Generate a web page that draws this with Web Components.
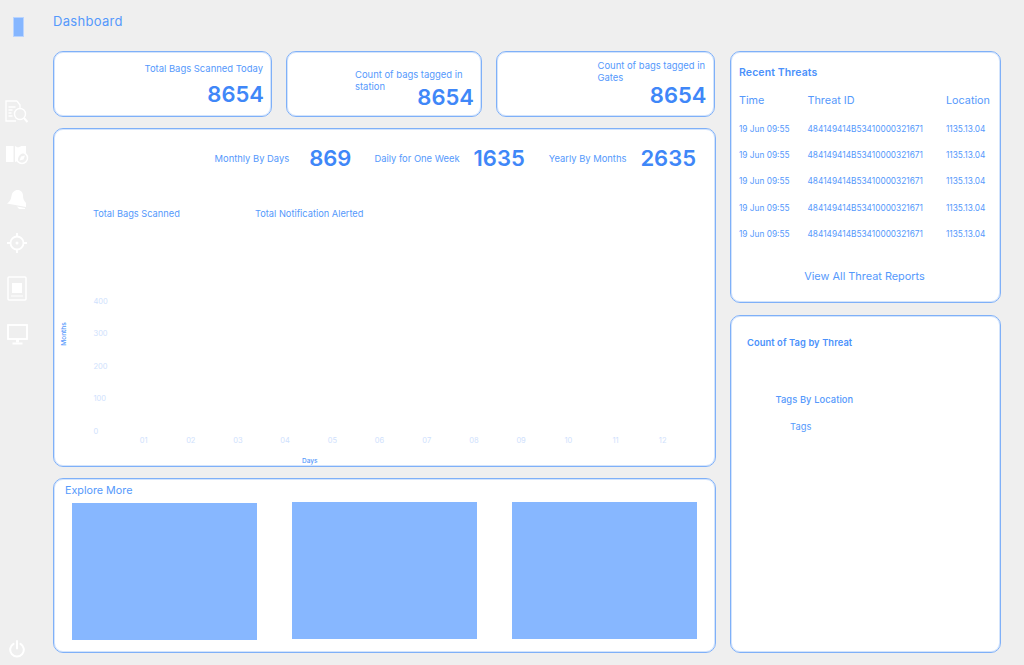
<!DOCTYPE html>
<html lang="en"><head><meta charset="utf-8"><title>Dashboard</title>
<style>
html,body{margin:0;padding:0;background:#efefef}
body{font-family:Inter,"Liberation Sans",sans-serif;color:#5599fc;width:1024px;height:665px;overflow:hidden}
</style></head><body>
<dash-app></dash-app>
<script>
const def=(name,html,init)=>customElements.define(name,class extends HTMLElement{
  constructor(){super();this.attachShadow({mode:'open'}).innerHTML=html;}
  connectedCallback(){init&&init(this,this.shadowRoot);}
});
const FONT='font-family:Inter,"Liberation Sans",sans-serif;';
const EDGE='background:#fff;border:1px solid #7fb0f8;box-shadow:inset 0 0 0 1px rgba(130,178,247,.35);border-radius:10px;';
def('dash-panel',`<style>:host{display:block;box-sizing:border-box;${EDGE}min-width:0}</style><slot></slot>`);

def('side-bar',`<style>:host{display:flex;flex-direction:column;align-items:center;box-sizing:border-box;width:37px;height:665px;padding-top:17px;margin-right:16px;flex:none}
svg{display:block;flex:none}
.logo{width:11px;height:20px;background:#85b6ff;border:1px solid #b9d4ff;box-sizing:border-box;margin-bottom:63px;margin-left:0}
.push{flex:1}
</style>
<div class="logo"></div>
<svg width="23" height="24" viewBox="0 0 23 24" fill="none" stroke="#fff" stroke-width="1.4" style="margin-bottom:21px;margin-left:-4px"><path d="M12 1H1v20h10M12 1l3 4v3M3.500 7h7M3.500 10h4M3.500 13h3M3.500 16h4"/><circle cx="15" cy="14" r="5.500"/><path d="M19 18l3.500 4" stroke-width="2"/></svg>
<svg width="23" height="20" viewBox="0 0 23 20" fill="#fff" style="margin-bottom:25px;margin-left:-3px"><path d="M0 1h7.500v16H0zM9 1l3 1.500L15.500 1H20v7a7 7 0 0 0-8 8l-3 1z"/><circle cx="16" cy="13" r="5.500" fill="none" stroke="#fff" stroke-width="1.500"/><path d="M13.500 15.500l1.500-4 4-1-1.500 4z"/></svg>
<svg width="19" height="19" viewBox="0 0 19 19" fill="#fff" style="margin-bottom:24px;margin-left:-4px"><path d="M10.500 0c3.600 0 5.500 2.500 5.500 5.500 0 3 .8 5 3 7.500v4L0 13.500C3 11.500 4 9 4.500 6 5 2.500 7.500 0 10.500 0z"/><path d="M10 16.500l8 1.500v1h-6z"/></svg>
<svg width="20" height="20" viewBox="0 0 20 20" fill="none" stroke="#fff" stroke-width="1.800" style="margin-bottom:23px;margin-left:-3px"><circle cx="10" cy="10" r="6.500"/><path d="M10 0v3.500M10 16.500V20M0 10h3.500M16.500 10H20"/><circle cx="10" cy="10" r="1.500" fill="#fff" stroke="none"/></svg>
<svg width="20" height="25" viewBox="0 0 20 25" fill="none" stroke="#fff" stroke-width="1.500" style="margin-bottom:23px;margin-left:-3px"><rect x="1" y="1" width="18" height="23" rx="1"/><rect x="5" y="7" width="10" height="10" fill="#fff" stroke="none"/><path d="M4 20h12" stroke-width="1"/></svg>
<svg width="21" height="21" viewBox="0 0 21 21" fill="none" stroke="#fff" stroke-width="1.800" style="margin-left:-3px"><rect x="1" y="1" width="19" height="14"/><path d="M10.500 15v3.500" stroke-width="3"/><path d="M5.500 19.500h10" stroke-width="2"/></svg>
<div class="push"></div>
<svg width="16" height="18" viewBox="0 0 16 18" fill="none" stroke="#fff" stroke-width="2" stroke-linecap="round" style="margin-bottom:7px;margin-left:-3px"><path d="M8 1v7.500"/><path d="M4.500 3.800a6.800 6.800 0 1 0 7 0"/></svg>`);

def('stat-card',`<style>:host{display:flex;flex-direction:column;box-sizing:border-box;height:66px;padding:0 8px var(--pb,16.500px) 0;align-items:flex-end;${EDGE}min-width:0}
.l{font-size:9.450px;line-height:11.600px;color:#5599fc;width:var(--lw,auto);white-space:nowrap;margin-top:var(--lt,10px);margin-bottom:-4px}
.n{font-size:22px;font-weight:600;line-height:12px;color:#3f87f8;margin-top:auto;margin-right:-1px}
</style><div class="l"><slot name="label"></slot></div><div class="n"><slot></slot></div>`);

def('metric-item',`<style>:host{display:flex;align-items:center;gap:var(--g,14px)}
.l{font-size:9.400px;color:#5599fc}.n{font-size:22px;font-weight:600;color:#3f87f8;line-height:29px}
</style><span class="l"><slot name="label"></slot></span><span class="n"><slot></slot></span>`);

def('bar-chart',`<style>:host{display:block;position:relative;height:165px;font-size:7.500px;color:#cfe1fd}
.y{position:absolute;left:39.500px;top:.5px;display:grid;grid-auto-rows:32.500px;line-height:10px}
.x{position:absolute;left:66px;top:140px;display:grid;grid-template-columns:repeat(12,47.200px);line-height:10px;text-align:center}
.mo{position:absolute;left:-2px;top:34px;font-size:6.500px;font-weight:500;color:#5599fc;transform:rotate(-90deg);transform-origin:center;width:24px;text-align:center;line-height:8px}
.da{position:absolute;left:248px;top:161px;font-size:6.500px;font-weight:500;color:#5599fc;line-height:8px}
</style>
<div class="y"><span>400</span><span>300</span><span>200</span><span>100</span><span>0</span></div>
<div class="x"><span>01</span><span>02</span><span>03</span><span>04</span><span>05</span><span>06</span><span>07</span><span>08</span><span>09</span><span>10</span><span>11</span><span>12</span></div>
<div class="mo">Months</div><div class="da">Days</div>`);

def('threat-row',`<style>:host{display:grid;grid-template-columns:68.500px 138.500px 1fr;height:26.300px;align-items:center;font-size:var(--fs,8.300px);color:#5599fc}
</style><span><slot name="a"></slot></span><span><slot name="b"></slot></span><span><slot name="c"></slot></span>`);

const rows=Array(5).fill(`<threat-row><span slot="a">19 Jun 09:55</span><span slot="b">484149414B53410000321671</span><span slot="c">1135.13.04</span></threat-row>`).join('');

def('dash-app',`<style>
:host{display:flex;height:665px;${FONT}color:#5599fc}
main{flex:none;width:663px}
h1{margin:0;font-size:13px;font-weight:400;line-height:16px;padding-top:13px;height:51px;box-sizing:border-box;letter-spacing:.3px;color:#5599fc}
.cards{display:grid;grid-template-columns:219px 196.500px 219px;gap:13.500px}
.chart{display:block;height:339px;margin-top:11px;box-sizing:border-box;padding:15px 19px 0 0}
.metrics{display:flex;justify-content:flex-end;height:29px}
.metrics metric-item+metric-item{margin-left:23px}
.metrics metric-item:last-child{margin-left:24px}
.leg{display:flex;font-size:9.250px;padding:35px 0 0 39px;line-height:12px;height:47px;box-sizing:border-box}
.leg span:first-child{width:162px}
.explore{display:block;height:175px;margin-top:11px;box-sizing:border-box;padding:5px 0 0 11px}
.ex-t{font-size:10.750px;line-height:13px}
.pics{display:flex;gap:35px;margin:6px 0 0 7px}
.pics div{width:185px;height:137px;background:#87b7ff}
.pics div+div{margin-top:-1px}
aside{flex:none;width:271px;margin:51px 0 0 14px;display:flex;flex-direction:column;gap:12px}
.rec{height:252px;box-sizing:border-box;padding:14px 8px 0 8px}
.rt{font-size:10.500px;font-weight:600;color:#4a91fb;line-height:13px;letter-spacing:.1px}
.hd{--fs:10.800px;height:30.500px;margin-top:6px}
.all{text-align:center;font-size:10.900px;line-height:14px;margin-top:22px;padding-right:2px}
.tag{height:338px;box-sizing:border-box;padding:21px 16px 0}
.tt{font-size:9.300px;font-weight:600;color:#4a91fb;line-height:12px;letter-spacing:.1px}
.tl{font-size:9.300px;font-weight:500;color:#5599fc;line-height:12px;margin:45px 0 0 28.500px;letter-spacing:.1px}
.tg{font-size:9.300px;line-height:12px;margin:15px 0 0 43px;letter-spacing:.1px}
</style>
<side-bar></side-bar>
<main>
<h1>Dashboard</h1>
<div class="cards">
<stat-card style="--lt:10.500px;--pb:16.500px"><span slot="label">Total Bags Scanned Today</span>8654</stat-card>
<stat-card style="--lw:118px;--lt:17px;--pb:13.500px"><span slot="label">Count of bags tagged in<br>station</span>8654</stat-card>
<stat-card style="--lw:108px;--lt:8px;--pb:15.500px"><span slot="label">Count of bags tagged in<br>Gates</span>8654</stat-card>
</div>
<dash-panel class="chart">
<div class="metrics">
<metric-item style="--g:20px"><span slot="label">Monthly By Days</span>869</metric-item>
<metric-item><span slot="label">Daily for One Week</span>1635</metric-item>
<metric-item><span slot="label">Yearly By Months</span>2635</metric-item>
</div>
<div class="leg"><span>Total Bags Scanned</span><span>Total Notification Alerted</span></div>
<bar-chart style="margin-top:76px"></bar-chart>
</dash-panel>
<dash-panel class="explore"><div class="ex-t">Explore More</div><div class="pics"><div></div><div></div><div></div></div></dash-panel>
</main>
<aside>
<dash-panel class="rec"><div class="rt">Recent Threats</div>
<threat-row class="hd"><span slot="a">Time</span><span slot="b">Threat ID</span><span slot="c">Location</span></threat-row>
${rows}
<div class="all">View All Threat Reports</div></dash-panel>
<dash-panel class="tag"><div class="tt">Count of Tag by Threat</div><div class="tl">Tags By Location</div><div class="tg">Tags</div></dash-panel>
</aside>`);
</script></body></html>
